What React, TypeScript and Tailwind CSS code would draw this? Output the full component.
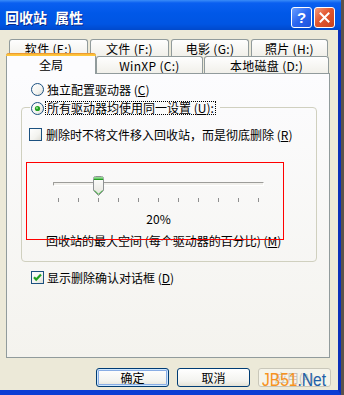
import React from "react";

const cjk = "font-['Noto_Sans_CJK_SC','Noto_Sans',sans-serif]";

function Radio({ checked = false }: { checked?: boolean }) {
  return (
    <svg width="13" height="13" viewBox="0 0 13 13" className="shrink-0">
      <defs>
        <linearGradient id={checked ? "rg1" : "rg0"} x1="0" y1="0" x2="1" y2="1">
          <stop offset="0" stopColor="#ffffff" />
          <stop offset="0.6" stopColor="#f4f4f0" />
          <stop offset="1" stopColor="#d6d5cc" />
        </linearGradient>
      </defs>
      <circle cx="6.5" cy="6.5" r="6" fill={`url(#${checked ? "rg1" : "rg0"})`} stroke="#1c5180" />
      {checked && (
        <>
          <circle cx="6.5" cy="6.5" r="2.6" fill="#21a121" />
          <circle cx="6" cy="6" r="1.1" fill="#8ee08e" />
        </>
      )}
    </svg>
  );
}

function Check({ checked = false }: { checked?: boolean }) {
  return (
    <svg width="13" height="13" viewBox="0 0 13 13" className="shrink-0">
      <defs>
        <linearGradient id={checked ? "cg1" : "cg0"} x1="0" y1="0" x2="1" y2="1">
          <stop offset="0" stopColor="#ffffff" />
          <stop offset="0.6" stopColor="#f3f3ef" />
          <stop offset="1" stopColor="#dcdbd2" />
        </linearGradient>
      </defs>
      <rect x="0.5" y="0.5" width="12" height="12" fill={`url(#${checked ? "cg1" : "cg0"})`} stroke="#1c5180" />
      {checked && (
        <path d="M3 6.2 L5.2 8.6 L10 3.6" fill="none" stroke="#21a121" strokeWidth="2.2" />
      )}
    </svg>
  );
}

function Thumb() {
  return (
    <svg width="11" height="20" viewBox="0 0 11 20">
      <defs>
        <linearGradient id="thumbg" x1="0" y1="0" x2="0" y2="1">
          <stop offset="0" stopColor="#ffffff" />
          <stop offset="1" stopColor="#e4e3dc" />
        </linearGradient>
      </defs>
      <path
        d="M0.5 2.5 Q0.5 0.5 2.5 0.5 H8.5 Q10.5 0.5 10.5 2.5 V14.5 L5.5 19.5 L0.5 14.5 Z"
        fill="url(#thumbg)"
        stroke="#8e9294"
      />
      <rect x="1" y="1" width="9" height="1.5" fill="#8ed98e" />
      <rect x="1" y="2.5" width="9" height="1.5" fill="#21a121" />
      <path d="M1.5 14.3 L5.5 18.3 L9.5 14.3" fill="none" stroke="#3fb33f" />
    </svg>
  );
}

function Tab({ label, w }: { label: string; w: string }) {
  return (
    <div
      className={`${w} h-[17px] border border-b-0 border-[#919b9c] rounded-t-[3px] bg-[linear-gradient(#fefefe,#f1f0ea)] flex items-center justify-center text-[12px] leading-[13px] tracking-[0.3px] text-black`}
    >
      {label}
    </div>
  );
}

function Button({
  children,
  primary,
  disabled,
}: {
  children: React.ReactNode;
  primary?: boolean;
  disabled?: boolean;
}) {
  return (
    <div
      className={[
        "w-[73px] h-[19px] rounded-[3px] border flex items-center justify-center text-[12px] leading-[13px]",
        disabled
          ? "border-[#c9c7ba] bg-[#f5f4ea] text-[#c4c1b4]"
          : "border-[#003c74] bg-[linear-gradient(#ffffff,#f3f3ef_70%,#e3e1d6)] text-black",
        primary ? "shadow-[inset_0_0_0_1px_#cee7ff,inset_0_0_0_2px_#89ade4]" : "",
      ].join(" ")}
    >
      {children}
    </div>
  );
}

export default function App() {
  const ticks = Array.from({ length: 11 });
  return (
    <div className={`w-[344px] h-[395px] overflow-hidden bg-[#5b524c] ${cjk}`}>
      <div className="w-[341px] h-[395px] flex flex-col">
        {/* Title bar */}
        <div className="h-[30px] shrink-0 flex items-center pt-[4px] pl-[5px] pr-[6px] bg-[linear-gradient(180deg,#3a8cf8_0%,#0a5ff0_10%,#0058e8_45%,#0055e3_80%,#0049cc_100%)]">
          <div className="flex-1 flex items-center text-white font-bold text-[14px] leading-[16px] [text-shadow:1px_1px_#0b2a8a]">
            <span>回收站</span>
            <span className="ml-[8px]">属性</span>
          </div>
          <div className="flex gap-[2px]">
            <div className="w-[21px] h-[21px] rounded-[3px] border border-white bg-[linear-gradient(135deg,#6aa0ff,#2a66f0_50%,#1c53dc)] flex items-center justify-center text-white font-bold text-[15px] leading-none font-['Liberation_Sans',sans-serif]">
              ?
            </div>
            <div className="w-[21px] h-[21px] rounded-[3px] border border-white bg-[linear-gradient(135deg,#f39a7c,#e2562f_45%,#c8421c)] flex items-center justify-center">
              <svg width="11" height="11" viewBox="0 0 11 11">
                <path d="M1.5 1.5 L9.5 9.5 M9.5 1.5 L1.5 9.5" stroke="#fff" strokeWidth="2" strokeLinecap="square" />
              </svg>
            </div>
          </div>
        </div>

        {/* Body */}
        <div className="flex-1 flex flex-col bg-[#ece9d8] border-r-[3px] border-r-[#0a2fb9] border-b-[5px] border-b-[#0b3ed4] pt-[9px] pl-[6px]">
          {/* Tab row 1 */}
          <div className="flex gap-[2px] pl-[3px]">
            <Tab label="软件 (E:)" w="w-[79px]" />
            <Tab label="文件 (F:)" w="w-[79px]" />
            <Tab label="电影 (G:)" w="w-[78px]" />
            <Tab label="照片 (H:)" w="w-[77px]" />
          </div>
          {/* Tab row 2 */}
          <div className="flex items-end h-[17px]">
            <div className="relative z-10 w-[90px] h-[21px] -mb-px flex flex-col border-x border-[#919b9c] rounded-t-[3px] bg-[#fcfcfe]">
              <div className="h-[3px] -mx-px rounded-t-[3px] bg-[linear-gradient(#e68b2c,#ffc73c_60%,#ffc73c)]" />
              <div className="flex-1 flex items-center justify-center text-[12px] leading-[13px] pb-[2px]">
                全局
              </div>
            </div>
            <Tab label="WinXP (C:)" w="w-[107px]" />
            <div className="w-[1px]" />
            <Tab label="本地磁盘 (D:)" w="w-[125px]" />
          </div>

          {/* Panel */}
          <div className="w-[324px] h-[285px] border border-[#919b9c] bg-[linear-gradient(#fcfcfe,#f4f3ee)] flex flex-col text-[12px] leading-[13px] text-black">
            <div className="mt-[9px] ml-[24px] flex items-center gap-[3px]">
              <Radio />
              <span>
                独立配置驱动器 (<u>C</u>)
              </span>
            </div>

            {/* Group box */}
            <div className="relative mt-[11px] ml-[14px] w-[296px] h-[155px] shrink-0 border border-[#d0d0bf] rounded-[4px] flex flex-col">
              <div className="absolute left-[8px] top-[-7px] flex items-center gap-[1px] pl-[1px] pr-[4px] bg-[#fbfbfb]">
                <Radio checked />
                <span className="border border-dotted border-black px-[1px] leading-[12px]">
                  所有驱动器均使用同一设置 (<u>U</u>):
                </span>
              </div>

              <div className="mt-[20px] ml-[7px] flex items-center gap-[4px]">
                <Check />
                <span>
                  删除时不将文件移入回收站，而是彻底删除 (<u>R</u>)
                </span>
              </div>

              {/* Slider */}
              <div className="mt-[35px] ml-[31px] w-[211px] flex flex-col">
                <div className="relative h-[20px]">
                  <div className="mt-[6px] h-[4px] border border-t-[#9d9c99] border-l-[#9d9c99] border-b-white border-r-white bg-[#f1f0ec] rounded-[1px]" />
                  <div className="absolute left-[40px] top-0">
                    <Thumb />
                  </div>
                </div>
                <div className="mt-[2px] ml-[5px] w-[201px] h-[4px] flex justify-between">
                  {ticks.map((_, i) => (
                    <div key={i} className="w-px h-[4px] bg-[#8f8f8f]" />
                  ))}
                </div>
                <div className="mt-[10px] text-center leading-[14px]">20%</div>
              </div>

              <div className="mt-[8px] ml-[24px]">
                回收站的最大空间 (每个驱动器的百分比) (<u>M</u>)
              </div>

              {/* Red highlight */}
              <div className="absolute left-[4px] top-[54px] w-[258px] h-[78px] border border-[#ff0000] pointer-events-none" />
            </div>

            <div className="mt-[9px] ml-[24px] flex items-center gap-[3px]">
              <Check checked />
              <span>
                显示删除确认对话框 (<u>D</u>)
              </span>
            </div>
          </div>

          {/* Buttons */}
          <div className="mt-[10px] w-[325px] flex justify-end gap-[8px]">
            <Button primary>确定</Button>
            <Button>取消</Button>
            <div className="relative">
              <Button disabled>应用(A)</Button>
              <div className="absolute left-[4px] top-[2px] whitespace-nowrap font-['Liberation_Sans',sans-serif] text-[19px] leading-[19px] scale-x-[0.82] origin-left">
                <span className="text-[#f7931e]">JB51</span>
                <span className="text-[#1d5fa8]">.Net</span>
              </div>
            </div>
          </div>
        </div>
      </div>
    </div>
  );
}
